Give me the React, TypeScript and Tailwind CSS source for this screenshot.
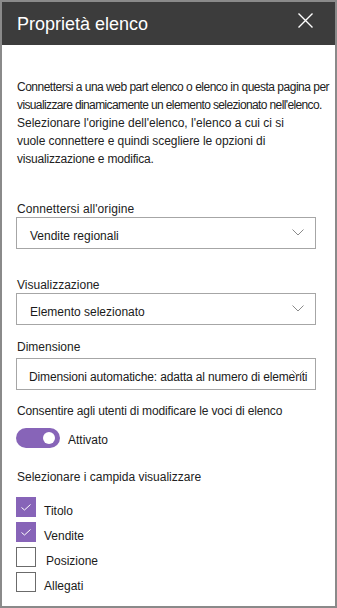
import React from 'react'

const Chevron = () => (
  <svg
    className="absolute right-[11px] top-[11px]"
    width="12"
    height="7"
    viewBox="0 0 12 7"
    fill="none"
  >
    <path d="M0.5 0.5 L6 6 L11.5 0.5" stroke="#8a8a8a" strokeWidth="1" />
  </svg>
)

const Dropdown = ({ value }: { value: string }) => (
  <div className="relative w-[300px] h-[32px] border border-[#a6a6a6] bg-white pl-[13px] pt-[10px] overflow-visible">
    <div className="text-[12px] leading-[16px] text-[#1a1a1a] whitespace-nowrap">{value}</div>
    <Chevron />
  </div>
)

const Check = ({ checked, label, shift }: { checked: boolean; label: string; shift?: boolean }) => (
  <div className="flex items-start h-[20px]">
    {checked ? (
      <div className="w-[20px] h-[20px] bg-[#8764b8] flex items-center justify-center">
        <svg width="20" height="20" viewBox="0 0 20 20" fill="none">
          <path d="M5.5 10.5 L8.5 13 L14.5 7.5" stroke="#ffffff" strokeWidth="1" />
        </svg>
      </div>
    ) : (
      <div className="w-[20px] h-[20px] border border-[#6b6b6b] bg-white" />
    )}
    <span
      className={`pt-[6px] text-[12px] leading-[16px] text-[#1a1a1a] ${shift ? 'ml-[10px]' : 'ml-[8px]'}`}
    >
      {label}
    </span>
  </div>
)

export default function App() {
  return (
    <div
      className="w-[337px] h-[608px] border-2 border-[#8a8a8a] bg-white overflow-hidden"
      style={{ fontFamily: '"Liberation Sans", Arial, sans-serif' }}
    >
      {/* Header */}
      <div className="h-[43px] bg-[#3c3c3c] flex items-start justify-between pl-[15px] pr-[22px]">
        <h1 className="mt-[10px] text-[18px] leading-[24px] text-white font-normal">Proprietà elenco</h1>
        <svg className="mt-[11px]" width="15" height="15" viewBox="0 0 15 15" fill="none">
          <path d="M0.5 0.5 L14.5 14.5 M14.5 0.5 L0.5 14.5" stroke="#ffffff" strokeWidth="1.4" />
        </svg>
      </div>

      <div className="px-[14px]">
        {/* Description */}
        <div className="mt-[33px] ml-[1px] text-[12px] leading-[18px] text-[#222]">
          <div className="whitespace-nowrap tracking-[-0.5px]">Connettersi a una web part elenco o elenco in questa pagina per</div>
          <div className="whitespace-nowrap tracking-[-0.62px]">visualizzare dinamicamente un elemento selezionato nell'elenco.</div>
          <div className="whitespace-nowrap">Selezionare l'origine dell'elenco, l'elenco a cui ci si</div>
          <div className="whitespace-nowrap tracking-[-0.08px]">vuole connettere e quindi scegliere le opzioni di</div>
          <div className="whitespace-nowrap tracking-[-0.2px]">visualizzazione e modifica.</div>
        </div>

        <div className="mt-[33px] ml-[1px] text-[12px] leading-[16px] text-[#222] tracking-[0.1px]">Connettersi all'origine</div>
        <Dropdown value="Vendite regionali" />

        <div className="mt-[28px] ml-[1px] text-[12px] leading-[16px] text-[#222]">Visualizzazione</div>
        <Dropdown value="Elemento selezionato" />

        <div className="mt-[14px] ml-[1px] text-[12px] leading-[16px] text-[#222]">Dimensione</div>
        <div className="mt-[3px]">
          <div className="relative w-[300px] h-[32px] border border-[#a6a6a6] bg-white pl-[12px] pt-[10px]">
            <div className="text-[12px] leading-[16px] text-[#1a1a1a] whitespace-nowrap tracking-[-0.15px]">
              Dimensioni automatiche: adatta al numero di elementi
            </div>
            <Chevron />
          </div>
        </div>

        <div className="mt-[13px] ml-[1px] text-[12px] leading-[16px] text-[#222] tracking-[-0.14px] whitespace-nowrap">
          Consentire agli utenti di modificare le voci di elenco
        </div>
        <div className="mt-[9px] flex items-start">
          <div className="w-[44px] h-[20px] rounded-full bg-[#8764b8] flex items-center justify-end pr-[5px]">
            <div className="w-[12px] h-[12px] rounded-full bg-white" />
          </div>
          <span className="ml-[8px] mt-[4px] text-[12px] leading-[16px] text-[#1a1a1a]">Attivato</span>
        </div>

        <div className="mt-[21px] ml-[1px] text-[12px] leading-[16px] text-[#222]">Selezionare i campida visualizzare</div>
        <div className="mt-[12px] flex flex-col gap-[5px]">
          <Check checked label="Titolo" />
          <Check checked label="Vendite" />
          <Check checked={false} label="Posizione" shift />
          <Check checked={false} label="Allegati" />
        </div>
      </div>
    </div>
  )
}
